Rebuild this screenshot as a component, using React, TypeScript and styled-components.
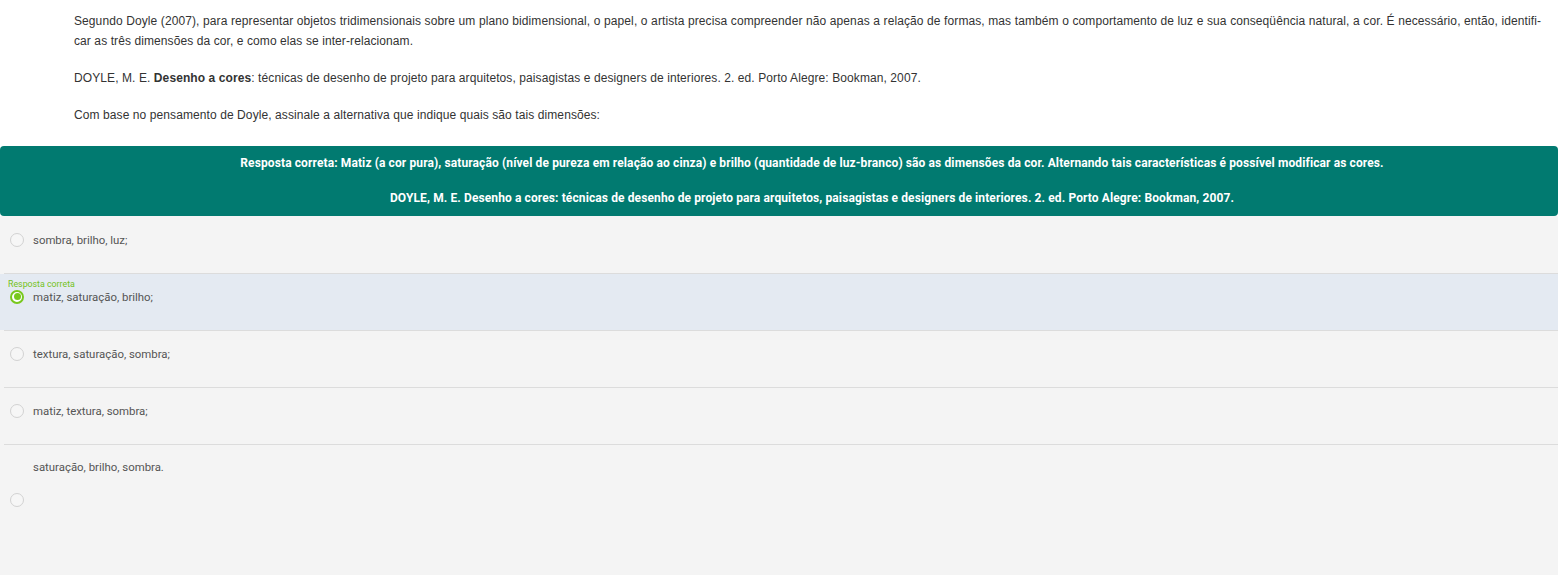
import React from 'react';
import styled, { createGlobalStyle } from 'styled-components';

const GlobalStyle = createGlobalStyle`
  body {
    margin: 0;
    background: #fff;
  }
`;

const Page = styled.div`
  width: 1558px;
  padding-bottom: 8px;
`;

const Statement = styled.div`
  padding: 11px 17px 0 74px;
  font-family: 'Liberation Sans', Arial, sans-serif;
  font-size: 12px;
  letter-spacing: 0.09px;
  line-height: 20px;
  color: #333;
  text-align: justify;
  margin-bottom: 21px;

  p {
    margin: 0 0 17px;
  }
  p:last-child {
    margin-bottom: 0;
  }
`;

const Feedback = styled.div`
  background: #017a70;
  border-radius: 4px;
  padding: 9px 0 9px 66px;
  color: #fff;
  font-family: Roboto, 'Noto Sans', sans-serif;
  font-weight: 700;
  font-size: 12px;
  letter-spacing: 0.11px;
  line-height: 17px;
  text-align: center;

  p {
    margin: 0 0 17.5px;
  }
  p:last-child {
    margin-bottom: 0;
  }
`;

const Options = styled.div`
  background: #f4f4f4;
  font-family: Roboto, 'Noto Sans', sans-serif;
  padding-top: 1px;
`;

const Row = styled.label<{ $selected?: boolean; $tall?: boolean }>`
  display: block;
  height: ${(p) => (p.$tall ? '130px' : '56px')};
  box-sizing: border-box;
  padding: ${(p) => (p.$selected ? '5px 10px 0' : p.$tall ? '15px 10px 0' : '16px 10px 0')};
  background: ${(p) => (p.$selected ? '#e4eaf2' : 'transparent')};
`;

const Divider = styled.div`
  height: 1px;
  margin-left: 4px;
  background: #dcdcdc;
`;

const CorrectTag = styled.div`
  font-size: 8.8px;
  line-height: 11px;
  color: #74c21a;
  margin-left: -2px;
`;

const Choice = styled.div<{ $stacked?: boolean }>`
  display: grid;
  grid-template-columns: 14px auto;
  column-gap: 9px;
  align-items: center;
  row-gap: 19px;

  ${(p) =>
    p.$stacked &&
    `
    > span:first-child { grid-row: 2; grid-column: 1; }
    > span:last-child { grid-row: 1; grid-column: 2; }
  `}
`;

const Radio = styled.span<{ $checked?: boolean }>`
  width: 14px;
  height: 14px;
  box-sizing: border-box;
  border-radius: 50%;
  border: ${(p) => (p.$checked ? '2px solid #78c81e' : '1px solid #d2d2d2')};
  background: ${(p) => (p.$checked ? '#fff' : '#f6f6f6')};
  display: flex;
  align-items: center;
  justify-content: center;

  &::after {
    content: '';
    display: ${(p) => (p.$checked ? 'block' : 'none')};
    width: 7px;
    height: 7px;
    border-radius: 50%;
    background: #78c81e;
  }
`;

const ChoiceText = styled.span`
  font-size: 11.4px;
  line-height: 14px;
  color: #555;
`;

const choices = [
  { text: 'sombra, brilho, luz;' },
  { text: 'matiz, saturação, brilho;', selected: true },
  { text: 'textura, saturação, sombra;' },
  { text: 'matiz, textura, sombra;' },
  { text: 'saturação, brilho, sombra.', tall: true },
];

export default function App() {
  return (
    <Page>
      <GlobalStyle />
      <Statement>
        <p>
          Segundo Doyle (2007), para representar objetos tridimensionais sobre um plano bidimensional, o papel, o
          artista precisa compreender não apenas a relação de formas, mas também o comportamento de luz e sua
          conseqüência natural, a cor. É necessário, então, identifi-car as três dimensões da cor, e como elas se
          inter-relacionam.
        </p>
        <p>
          DOYLE, M. E. <b>Desenho a cores</b>: técnicas de desenho de projeto para arquitetos, paisagistas e
          designers de interiores. 2. ed. Porto Alegre: Bookman, 2007.
        </p>
        <p>Com base no pensamento de Doyle, assinale a alternativa que indique quais são tais dimensões:</p>
      </Statement>

      <Feedback>
        <p>
          Resposta correta: Matiz (a cor pura), saturação (nível de pureza em relação ao cinza) e brilho (quantidade
          de luz-branco) são as dimensões da cor. Alternando tais características é possível modificar as cores.
        </p>
        <p>
          DOYLE, M. E. Desenho a cores: técnicas de desenho de projeto para arquitetos, paisagistas e designers de
          interiores. 2. ed. Porto Alegre: Bookman, 2007.
        </p>
      </Feedback>

      <Options>
        {choices.map((c, i) => (
          <React.Fragment key={i}>
            <Row $selected={c.selected} $tall={c.tall}>
              {c.selected && <CorrectTag>Resposta correta</CorrectTag>}
              <Choice $stacked={c.tall}>
                <Radio $checked={c.selected} />
                <ChoiceText>{c.text}</ChoiceText>
              </Choice>
            </Row>
            {i < choices.length - 1 && <Divider />}
          </React.Fragment>
        ))}
      </Options>
    </Page>
  );
}
